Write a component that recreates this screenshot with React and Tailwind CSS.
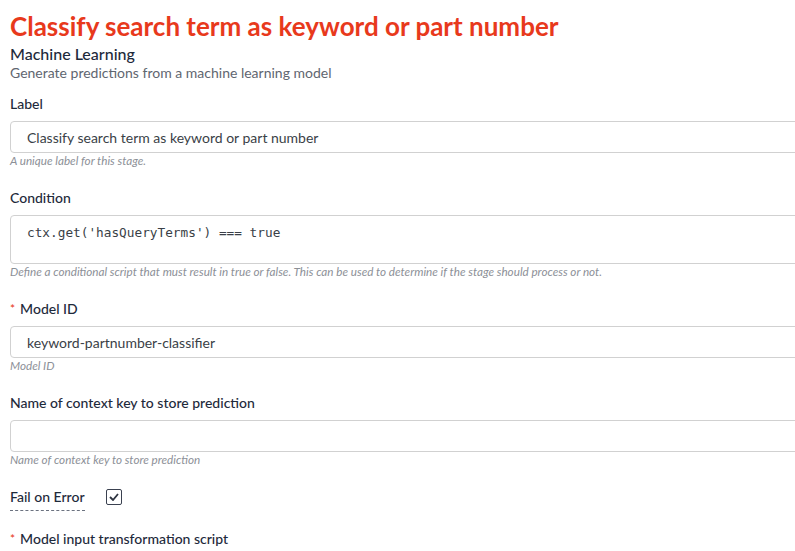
import React from 'react';

// Field wrapper: label, control and helper text
const Field = ({ label, required, help, children }) => (
    <div className="mb-[21px]">
        <div className="text-[14px] leading-[20px] font-medium text-[#1e2a3b] mb-[7px] flex items-center">
            {required && <span className="text-[#e8391c] text-[12px] mr-[5px]">*</span>}
            <span>{label}</span>
        </div>
        {children}
        <div className="italic text-[11.7px] leading-[14px] text-[#8c9097]">{help}</div>
    </div>
);

const TextInput = ({ value }) => (
    <div className="w-[820px] h-[32px] border border-[#d1d1d1] rounded-[4px] px-[16px] flex items-center text-[14px] text-[#3a3f47]">
        {value}
    </div>
);

export default function App() {
    return (
        <div className="w-[795px] h-[551px] overflow-hidden bg-white px-[10px] pt-[8px]" style={{ fontFamily: 'Lato, "Noto Sans", sans-serif' }}>
            <h1 className="text-[26px] leading-[36px] font-bold text-[#e8391c]">Classify search term as keyword or part number</h1>
            <div className="text-[16px] leading-[20px] font-medium text-[#1e2a3b]">Machine Learning</div>
            <div className="text-[14px] leading-[17px] text-[#5f6670]">Generate predictions from a machine learning model</div>

            <div className="mt-[13px]">
                <Field label="Label" help="A unique label for this stage.">
                    <TextInput value="Classify search term as keyword or part number" />
                </Field>

                <Field label="Condition" help="Define a conditional script that must result in true or false. This can be used to determine if the stage should process or not.">
                    <div className="w-[820px] h-[49px] border border-[#d1d1d1] rounded-[4px] px-[16px] pt-[7px] text-[12.75px] text-[#3a3f47]" style={{ fontFamily: '"DejaVu Sans Mono", monospace' }}>
                        ctx.get('hasQueryTerms') === true
                    </div>
                </Field>

                <Field label="Model ID" required help="Model ID">
                    <TextInput value="keyword-partnumber-classifier" />
                </Field>

                <Field label="Name of context key to store prediction" help="Name of context key to store prediction">
                    <TextInput value="" />
                </Field>

                <div className="flex items-start mt-[19px]">
                    <div className="text-[14px] leading-[20px] font-medium text-[#1e2a3b] border-b border-dashed border-[#6b7280] pb-[3px]">Fail on Error</div>
                    <div className="ml-[21px] mt-[2px] w-[16px] h-[16px] border border-[#3a4150] rounded-[2px] flex items-center justify-center">
                        <svg width="10" height="8" viewBox="0 0 10 8">
                            <path d="M1 4 L4 7 L9 1" fill="none" stroke="#2d3340" strokeWidth="1.8" />
                        </svg>
                    </div>
                </div>

                <div className="text-[14px] leading-[20px] font-medium text-[#1e2a3b] mt-[18px] flex items-center">
                    <span className="text-[#e8391c] text-[12px] mr-[5px]">*</span>
                    <span>Model input transformation script</span>
                </div>
            </div>
        </div>
    );
}
